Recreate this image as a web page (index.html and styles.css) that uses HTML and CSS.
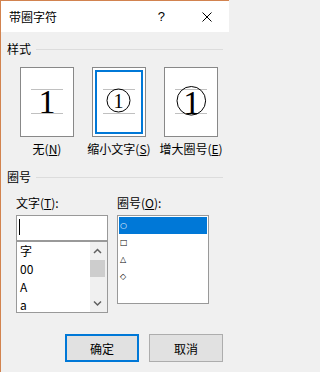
FILE: index.html
```html
<!DOCTYPE html>
<html lang="zh-CN">
<head>
<meta charset="utf-8">
<title>带圈字符</title>
<link rel="stylesheet" href="styles.css">
</head>
<body>
<div class="window">
  <div class="titlebar">
    <span class="title">带圈字符</span>
    <span class="help">?</span>
    <svg class="close" width="10" height="10" viewBox="0 0 10 10"><path d="M0.5 0.5 L9.5 9.5 M9.5 0.5 L0.5 9.5" stroke="#000" stroke-width="1" fill="none"/></svg>
  </div>
  <div class="content">
    <div class="group-head"><span>样式</span><i class="rule"></i></div>
    <div class="styles">
      <div class="opt">
        <div class="box">
          <svg width="52" height="68" viewBox="0 0 52 68">
            <path d="M10 21.5 H42 M10 45.5 H42" stroke="#c0c0c0" stroke-width="1"/>
            <text x="26" y="45" text-anchor="middle" class="digit big">1</text>
          </svg>
        </div>
        <div class="opt-label">无(<u>N</u>)</div>
      </div>
      <div class="opt">
        <div class="box sel">
          <svg width="52" height="68" viewBox="0 0 52 68">
            <path d="M10 21.5 H42 M10 45.5 H42" stroke="#c0c0c0" stroke-width="1"/>
            <circle cx="25.5" cy="32.5" r="11.5" fill="none" stroke="#000" stroke-width="1"/>
            <text x="25.5" y="39.7" text-anchor="middle" class="digit small">1</text>
          </svg>
        </div>
        <div class="opt-label">缩小文字(<u>S</u>)</div>
      </div>
      <div class="opt">
        <div class="box">
          <svg width="52" height="68" viewBox="0 0 52 68">
            <path d="M10 21.5 H42 M10 45.5 H42" stroke="#c0c0c0" stroke-width="1"/>
            <circle cx="26.3" cy="32.8" r="14.3" fill="none" stroke="#000" stroke-width="1"/>
            <text x="26.8" y="45.5" text-anchor="middle" class="digit big">1</text>
          </svg>
        </div>
        <div class="opt-label">增大圈号(<u>E</u>)</div>
      </div>
    </div>
    <div class="group-head second"><span>圈号</span><i class="rule"></i></div>
    <div class="fields">
      <div class="field">
        <div class="field-label">文字(<u>T</u>):</div>
        <div class="textbox"><i class="caret"></i></div>
        <div class="listbox">
          <ul class="items">
            <li>字</li>
            <li>00</li>
            <li>A</li>
            <li>a</li>
          </ul>
          <div class="scrollbar">
            <svg class="arrow" width="17" height="17" viewBox="0 0 17 17"><polyline points="4,11 7.5,7.5 11,11" fill="none" stroke="#606060" stroke-width="1.5"/></svg>
            <div class="thumb"></div>
            <div class="track"></div>
            <svg class="arrow" width="17" height="17" viewBox="0 0 17 17"><polyline points="4,6.5 7.5,10 11,6.5" fill="none" stroke="#606060" stroke-width="1.5"/></svg>
          </div>
        </div>
      </div>
      <div class="field">
        <div class="field-label">圈号(<u>O</u>):</div>
        <ul class="enclosures">
          <li class="sel">○</li>
          <li>□</li>
          <li>△</li>
          <li>◇</li>
        </ul>
      </div>
    </div>
    <div class="buttons">
      <button class="btn default">确定</button>
      <button class="btn">取消</button>
    </div>
  </div>
</div>
</body>
</html>
```

FILE: styles.css
```css
html, body {
  margin: 0;
  padding: 0;
}
body {
  width: 229px;
  height: 372px;
  overflow: hidden;
  background: #f0f0f0;
  font-family: "Noto Sans CJK SC", "Microsoft YaHei", sans-serif;
  font-size: 12px;
  color: #000;
}
.window {
  box-sizing: border-box;
  height: 372px;
  border-left: 1px solid #d2834f;
  border-top: 1px solid #d2834f;
  background: #f0f0f0;
}
.titlebar {
  height: 31px;
  background: #fff;
  display: flex;
  align-items: center;
  padding: 0 17px 0 8px;
}
.title {
  flex: 1;
  line-height: 16px;
}
.help {
  font-family: "Liberation Sans", sans-serif;
  font-size: 13px;
  line-height: 16px;
  margin-right: 37px;
}
.close {
  display: block;
}
.group-head {
  display: flex;
  align-items: center;
  height: 14px;
  margin: 10px 6px 0 6px;
}
.group-head span {
  line-height: 14px;
}
.group-head.second {
  margin-top: 13px;
}
.rule {
  flex: 1;
  height: 1px;
  background: #dcdcdc;
  margin-left: 5px;
}
.styles {
  display: flex;
  gap: 18px;
  margin: 11px 0 0 19px;
}
.opt {
  width: 54px;
  display: flex;
  flex-direction: column;
  align-items: center;
}
.box {
  box-sizing: border-box;
  width: 54px;
  height: 70px;
  border: 1px solid #888;
  background: #fff;
}
.box.sel {
  box-shadow: inset 0 0 0 2px #fff, inset 0 0 0 4px #0078d7;
}
.box svg {
  display: block;
}
.digit {
  font-family: "Liberation Serif", serif;
  fill: #000;
}
.digit.big {
  font-size: 34px;
}
.digit.small {
  font-size: 20px;
}
.opt-label {
  margin-top: 4px;
  line-height: 16px;
  white-space: nowrap;
}
.fields {
  display: flex;
  gap: 9px;
  margin: 12px 0 0 15px;
}
.field {
  width: 92px;
}
.field-label {
  height: 14px;
  line-height: 14px;
  margin-bottom: 5px;
  white-space: nowrap;
}
.textbox {
  box-sizing: border-box;
  height: 26px;
  border: 1px solid #999;
  background: #fff;
  padding: 3px 0 0 2px;
}
.caret {
  display: block;
  width: 1px;
  height: 16px;
  background: #000;
}
.listbox {
  box-sizing: border-box;
  height: 72px;
  border: 1px solid #999;
  background: #fff;
  display: flex;
  overflow: hidden;
}
.items {
  flex: 1;
  list-style: none;
  margin: 0;
  padding: 0 0 0 3px;
}
.items li {
  height: 18px;
  line-height: 18px;
}
.scrollbar {
  width: 17px;
  background: #f0f0f0;
  display: flex;
  flex-direction: column;
}
.arrow {
  display: block;
  flex: none;
}
.thumb {
  width: 15px;
  height: 17px;
  margin-top: 1px;
  background: #cdcdcd;
}
.track {
  flex: 1;
}
.enclosures {
  box-sizing: border-box;
  height: 89px;
  border: 1px solid #999;
  background: #fff;
  list-style: none;
  margin: 0;
  padding: 1px;
}
.enclosures li {
  height: 17px;
  line-height: 17px;
  padding-left: 1px;
  font-family: "DejaVu Sans", sans-serif;
  font-size: 8px;
}
.enclosures li.sel {
  background: #0078d7;
  color: #fff;
}
.buttons {
  display: flex;
  justify-content: flex-end;
  gap: 10px;
  margin: 21px 6px 0 0;
}
.btn {
  box-sizing: border-box;
  width: 74px;
  height: 28px;
  padding: 0;
  background: #e1e1e1;
  border: 1px solid #adadad;
  font: inherit;
  color: #000;
}
.btn.default {
  border: 2px solid #0078d7;
}
```
